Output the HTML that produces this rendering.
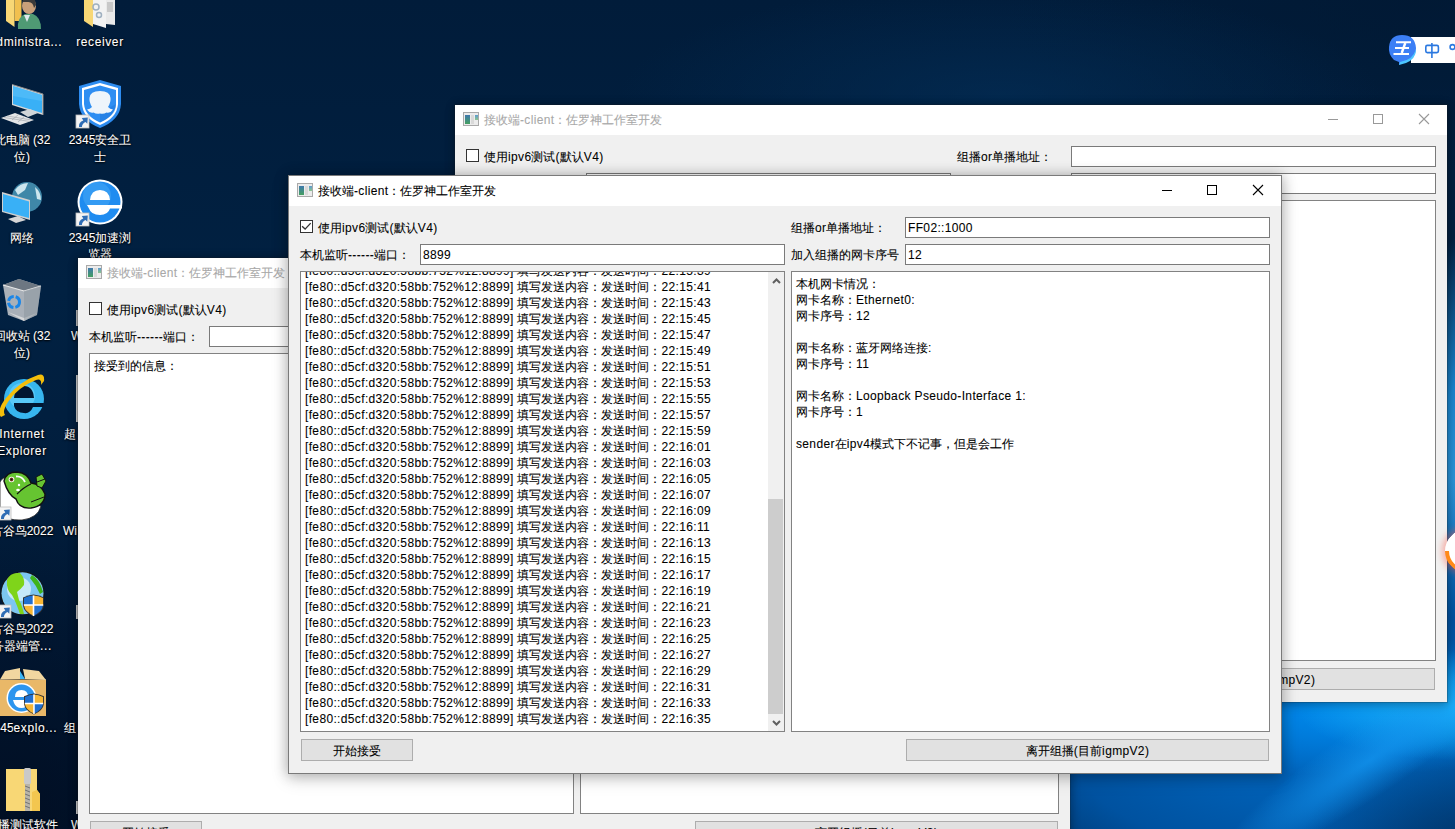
<!DOCTYPE html>
<html><head><meta charset="utf-8">
<style>
*{margin:0;padding:0;box-sizing:border-box}
html,body{width:1455px;height:829px;overflow:hidden}
body{position:relative;font-family:"Liberation Sans", sans-serif;font-size:12px;color:#000;-webkit-text-stroke:0.08px currentColor;
background:#03193a;}
#bg{position:absolute;left:0;top:0;width:1455px;height:829px;
background:
 radial-gradient(ellipse 160px 55px at 1455px 705px, rgba(30,185,255,0.95), rgba(30,185,255,0) 100%),
 radial-gradient(ellipse 300px 70px at 1340px 705px, rgba(0,140,240,0.95), rgba(0,140,240,0) 100%),
 radial-gradient(ellipse 170px 110px at 1470px 850px, rgba(1,50,100,0.95), rgba(1,50,100,0) 100%),
 radial-gradient(ellipse 520px 260px at 1320px 730px, #006cc8 0%, #0052a0 50%, rgba(0,60,130,0) 100%),
 radial-gradient(ellipse 110px 300px at 1490px 520px, #4ab0ec 0%, rgba(30,150,230,0.85) 55%, rgba(0,60,130,0) 100%),
 radial-gradient(ellipse 300px 350px at 0px 829px, rgba(1,10,28,0.6), rgba(1,10,28,0) 100%),
 radial-gradient(ellipse 380px 110px at 1000px 95px, rgba(3,44,84,0.75), rgba(3,44,84,0) 100%),
 radial-gradient(ellipse 420px 170px at 1420px 0px, rgba(1,24,50,0.7), rgba(1,24,50,0) 100%),
 linear-gradient(180deg, #011c3a 0%, #012142 35%, #011d3c 65%, #01152e 100%);
}
.win{position:absolute;width:994px;height:599px;border:1px solid #7b7b7b;background:#f0f0f0;background-clip:padding-box}
.title{position:absolute;left:0;top:0;width:992px;height:30px;background:#fff}
.ticon{position:absolute;left:8px;top:7px;width:16px;height:14px;border:1px solid #a9a9a9;background:#ececec}
.tig{position:absolute;left:1px;top:2px;width:5px;height:9px;background:linear-gradient(180deg,#3f78ad,#45a060)}
.tiw{position:absolute;left:7px;top:2px;width:3px;height:9px;background:#d9d9d9}
.tib{position:absolute;left:11px;top:2px;width:3px;height:5px;background:linear-gradient(180deg,#5d9ad0,#8cc68c)}
.ttext{position:absolute;left:29px;top:7px;line-height:16px;white-space:nowrap}
.tmin{position:absolute;left:873px;top:14px;width:10px;height:1px}
.tmax{position:absolute;left:918px;top:9px;width:10px;height:10px;border:1px solid #000}
.tclose{position:absolute;left:963px;top:8px}
.cb{position:absolute;width:13px;height:13px;border:1px solid #333;background:#fff}
.lbl{position:absolute;line-height:16px;white-space:nowrap}
.inp{position:absolute;width:365px;height:21px;border:1px solid #7a7a7a;background:#fff}
.inp span{position:absolute;left:2px;top:2px;line-height:16px}
.ta{position:absolute;height:461px;border:1px solid #828282;background:#fff;overflow:hidden}
.log{position:absolute;left:4px;white-space:nowrap}
.ln{height:16px;line-height:16px}
.sb{position:absolute;right:0;top:0;width:16px;height:459px;background:#f0f0f0}
.thumb{position:absolute;left:0;top:227px;width:15px;height:215px;background:#cdcdcd}
.arr{position:absolute;left:3.5px}
.btn{position:absolute;height:22px;border:1px solid #adadad;background:#e1e1e1;text-align:center}
.btn span{line-height:22.5px}
.icon{position:absolute}
.l{font-style:normal;letter-spacing:0.35px}
.c{display:inline-block;font-weight:normal;white-space:nowrap;vertical-align:top;text-align:justify;text-align-last:justify}
.ll{font-style:normal;letter-spacing:0.6px}
.il{position:absolute;color:#fff;text-align:center;line-height:16px;text-shadow:0 0 2px #000,0 1px 2px #000;white-space:nowrap}
</style></head><body>
<div id="bg"></div>
<div style="position:absolute;left:1190px;top:725px;width:360px;height:70px;border-radius:50%;background:radial-gradient(ellipse closest-side, rgba(20,150,240,0.75), rgba(20,150,240,0));transform:rotate(-34deg)"></div>
<svg style="position:absolute;left:0;top:0" width="1455" height="829"><path d="M6 0 L14.5 0 L14.5 27 L6 21 Z" fill="#f8d775"/><path d="M14.5 0 L21.5 0 L21.5 21 L14.5 21 Z" fill="#f1c04f"/><ellipse cx="29" cy="6" rx="7" ry="8" fill="#c9a07a"/><path d="M22 2 Q24 -3 30 -3 Q36 -2 36 5 L34 8 Q33 1 27 2 Z" fill="#3a3a3a"/><path d="M18 29 Q17 17 25 14 L33 14 Q41 17 41 29 Z" fill="#4f9a74"/><path d="M24 15 L27 22 L30 15 Z" fill="#dfe9ee"/><path d="M84 0 L93 0 L93 27 L84 21 Z" fill="#f8d775"/><path d="M93 0 L106 0 L106 28 L93 24 Z" fill="#f2f2f2"/><path d="M106 0 L115 0 L115 25 L106 24 Z" fill="#e9e9e9"/><circle cx="96" cy="7" r="3" fill="none" stroke="#9fb0c0" stroke-width="1.5"/><circle cx="99" cy="15" r="2.5" fill="none" stroke="#9fb0c0" stroke-width="1.5"/><rect x="107" y="2" width="6" height="10" fill="#c8c8c8"/><path d="M12 84.5 L43 94 L43 115 L12 105 Z" fill="#d8d8d8"/><path d="M13 86 L42 95 L42 113 L13 104 Z" fill="#39b0f6"/><path d="M13 86 L42 95 L42 101 L13 96 Z" fill="#5cc2fa" opacity="0.6"/><path d="M20 112 L30 109 L38 113 L28 117 Z" fill="#d0d5d8"/><path d="M1 118 L15 113 L34 120 L20 125 Z" fill="#e4e6e8"/><path d="M4 117.5 L30 121.5 M7 116 L32 120 M12 120 L19 114 M18 122 L25 116" stroke="#9aa0a6" stroke-width="0.6"/><path d="M12 84.5 L43 94 L43 115" fill="none" stroke="#8a8a8a" stroke-width="1"/><path d="M79 86 L100 80 L121 86 L121 104 Q120 120 100 128 Q80 120 79 104 Z" fill="#2d8cf0"/><path d="M82 88 L100 83 L118 88 L118 104 Q117 118 100 125 Q83 118 82 104 Z" fill="#fff"/><path d="M84 90 L100 85.5 L116 90 L116 104 Q115 116 100 122.5 Q85 116 84 104 Z" fill="#2e8ef2"/><path d="M100 113 L116 104 L116 106 Q115 116 100 122.5 Z" fill="#1d73d6" opacity="0.45"/><path d="M92 107 Q89 102 89.5 98 Q90 91 100 91 Q110 91 110.5 98 Q111 102 108 107 Q110 109 113 109.5 Q110.5 113.5 106.5 112.5 Q103.5 114.5 100 113.5 Q96.5 114.5 93.5 112.5 Q89.5 113.5 87 109.5 Q90 109 92 107 Z" fill="#eef5fb"/><g transform="translate(76,115)"><rect x="0" y="0" width="13" height="13" fill="#f4f4f4" stroke="#bdbdbd" stroke-width="0.8"/><path d="M3 12 Q2.5 7 7.3 5.4 L5.8 3 L11.8 2.6 L11.3 8.8 L9.6 6.9 Q6.2 8.2 5.9 12 Z" fill="#2f6db5"/></g><circle cx="27" cy="197" r="15" fill="#3f87a8"/><path d="M15 190 Q20 183 28 183 L25 190 L18 195 Z" fill="#cde6ee"/><path d="M35 187 Q41 192 41 200 L37 199 Z" fill="#cde6ee"/><path d="M2 192 L30 200 L30 220 L2 212 Z" fill="#cfcfcf"/><path d="M3 194 L29 201.5 L29 218 L3 211 Z" fill="#39b0f6"/><path d="M8 219 L18 216 L26 220 L16 223 Z" fill="#d6d6d6"/><circle cx="100" cy="202" r="22.5" fill="#fff"/><circle cx="100" cy="202" r="20.5" fill="#1f8cf0"/><circle cx="97" cy="196" r="14" fill="#4aaaf6" opacity="0.5"/><path d="M90 200 Q91 190 100 190 Q109 190 110 200 Z M87 205 L122 205 L122 208.5 L110 208.5 Q108 215 100 215 Q91 215 89 208.5 Z" fill="#fff"/><g transform="translate(76,213)"><rect x="0" y="0" width="13" height="13" fill="#f4f4f4" stroke="#bdbdbd" stroke-width="0.8"/><path d="M3 12 Q2.5 7 7.3 5.4 L5.8 3 L11.8 2.6 L11.3 8.8 L9.6 6.9 Q6.2 8.2 5.9 12 Z" fill="#2f6db5"/></g><path d="M3 285 L19 279 L41 286 L37 315 L24 321 L8 315 Z" fill="#a9b0b8"/><path d="M3 285 L19 279 L41 286 L24 291 Z" fill="#6d7782"/><path d="M3 285 L24 291 L41 286" fill="none" stroke="#e8e8e8" stroke-width="1.2"/><path d="M8 312 L24 318 L37 313 L24 321 Z" fill="#d4d6d8"/><path d="M24 291 L24 321 L37 315 L41 286 Z" fill="#8a939c" opacity="0.5"/><circle cx="14" cy="302" r="5.5" fill="none" stroke="#1a86e8" stroke-width="3" stroke-dasharray="7 2"/><circle cx="24" cy="399" r="20" fill="#37b6ef"/><circle cx="22" cy="396" r="13" fill="#6fd4fb" opacity="0.6"/><path d="M14 398 Q15 386 24 386 Q33 386 34 398 Z" fill="#021631"/><path d="M14 403 L44 403 L43 407 L33 407 Q30 414 24 413 Q16 413 14 406 Z" fill="#021631"/><path d="M1 417 Q-4 411 6 398 Q20 381 38 375 Q45 373 44 381 L41 385 Q42 378 36 380 Q18 387 8 402 Q2 411 5 415 Z" fill="#f4be0a"/><path d="M0 482 Q3 476 9 478 L20 492 Q30 503 41 506 Q38 518 22 520 Q6 521 0 512 Z" fill="#fff" stroke="#222" stroke-width="0.8"/><path d="M4 481 Q6 472 17 472 Q28 473 31 483 Q41 484 45 494 Q45 506 31 508 Q19 509 16 499 Q8 495 4 481 Z" fill="#66c431" stroke="#111" stroke-width="1.4"/><path d="M17 494 Q24 487 31 484" fill="none" stroke="#111" stroke-width="1.2"/><path d="M31 502 L44 497" stroke="#111" stroke-width="1"/><path d="M36 477 L42 474 L46 481 L42 488 L37 486 Z" fill="#66c431" stroke="#111" stroke-width="1"/><path d="M37 482 L45 479" stroke="#111" stroke-width="1"/><circle cx="11.5" cy="479.5" r="2.8" fill="#fff"/><circle cx="11.5" cy="479.5" r="1.9" fill="#8a4a2a"/><circle cx="11.5" cy="479.5" r="1.1" fill="#111"/><path d="M16 476.5 Q22 476 25 482" stroke="#fff" stroke-width="1.8" fill="none"/><circle cx="19" cy="485" r="1.2" fill="#fff"/><ellipse cx="18" cy="490" rx="1.8" ry="1.2" fill="#fff"/><g transform="translate(-2,507)"><rect x="0" y="0" width="13" height="13" fill="#f4f4f4" stroke="#bdbdbd" stroke-width="0.8"/><path d="M3 12 Q2.5 7 7.3 5.4 L5.8 3 L11.8 2.6 L11.3 8.8 L9.6 6.9 Q6.2 8.2 5.9 12 Z" fill="#2f6db5"/></g><circle cx="22.5" cy="593.3" r="22" fill="#151515"/><circle cx="22.5" cy="593.3" r="21" fill="#7cc6f0"/><circle cx="19" cy="589" r="12" fill="#d9f0fb" opacity="0.8"/><path d="M7 580 Q10 572 20 573 Q25 578 24 585 Q20 590 17 592 L19 600 Q22 605 24 614 L20 614 Q16 602 12 595 Q6 590 7 580 Z" fill="#7fd41a"/><path d="M32 575 Q40 580 43 592 L40 594 Q36 585 30 578 Z" fill="#3fb31a"/><g transform="translate(23,594.5) scale(1)"><path d="M0 3 Q5 0.5 10.5 0 Q16 0.5 21 3 L21 11 Q20 18 10.5 22 Q1 18 0 11 Z" fill="#333"/><path d="M1 3.6 Q5.5 1.4 10.5 1 L10.5 10.5 L1 10.5 Z" fill="#1f6fd0"/><path d="M10.5 1 Q15.5 1.4 20 3.6 L20 10.5 L10.5 10.5 Z" fill="#f7b635"/><path d="M1 10.5 L10.5 10.5 L10.5 21 Q2 17.5 1 11 Z" fill="#f7b635"/><path d="M10.5 10.5 L20 10.5 L20 11 Q19 17.5 10.5 21 Z" fill="#1f6fd0"/><path d="M10.5 1 L10.5 21.5 M0.8 10.5 L20.2 10.5" stroke="#fff" stroke-width="1.6"/></g><g transform="translate(-2,605)"><rect x="0" y="0" width="13" height="13" fill="#f4f4f4" stroke="#bdbdbd" stroke-width="0.8"/><path d="M3 12 Q2.5 7 7.3 5.4 L5.8 3 L11.8 2.6 L11.3 8.8 L9.6 6.9 Q6.2 8.2 5.9 12 Z" fill="#2f6db5"/></g><path d="M0 679.5 L46 679.5 L46 716 L0 716 Z" fill="#e9b868"/><path d="M0 679.5 L5 671 L20 668 L20 679 Z" fill="#f1d7a0"/><path d="M23 669 L39 671 L46 680 L25 679 Z" fill="#f1d7a0"/><path d="M20 671 L25 679 L20 679 Z" fill="#3cb5f5"/><circle cx="21.5" cy="698" r="15" fill="#fff"/><circle cx="21.5" cy="698" r="13.5" fill="#2c95ee"/><path d="M15 697 Q15 690 21.5 690 Q28 690 28 697 Z M13 700 L36 700 L36 703 L28 703 Q27 708 21.5 708 Q16 708 14 703 Z" fill="#fff"/><g transform="translate(24,693.5) scale(0.95)"><path d="M0 3 Q5 0.5 10.5 0 Q16 0.5 21 3 L21 11 Q20 18 10.5 22 Q1 18 0 11 Z" fill="#333"/><path d="M1 3.6 Q5.5 1.4 10.5 1 L10.5 10.5 L1 10.5 Z" fill="#1f6fd0"/><path d="M10.5 1 Q15.5 1.4 20 3.6 L20 10.5 L10.5 10.5 Z" fill="#f7b635"/><path d="M1 10.5 L10.5 10.5 L10.5 21 Q2 17.5 1 11 Z" fill="#f7b635"/><path d="M10.5 10.5 L20 10.5 L20 11 Q19 17.5 10.5 21 Z" fill="#1f6fd0"/><path d="M10.5 1 L10.5 21.5 M0.8 10.5 L20.2 10.5" stroke="#fff" stroke-width="1.6"/></g><path d="M6 769 L37 769 L37 790 L40 794 L40 811 L6 811 Z" fill="#f8d775"/><path d="M32 792 L37 790 L40 794 L40 811 L32 811 Z" fill="#f3c64f"/><rect x="24" y="768" width="7" height="16" rx="1.5" fill="#c9c9c9"/><rect x="25" y="784" width="5" height="27" fill="#b8b4a8"/><path d="M25 786 L30 788 M25 790 L30 792 M25 794 L30 796 M25 798 L30 800 M25 802 L30 804 M25 806 L30 808" stroke="#6b6b6b" stroke-width="0.9"/><rect x="76" y="310" width="2" height="16" fill="#bfbfbf"/><rect x="76" y="375" width="2" height="47" fill="#cfcfcf"/><rect x="76" y="801" width="2" height="13" fill="#cfcfcf"/><rect x="76" y="605" width="2" height="14" fill="#c8c8c8"/></svg>
<div class="il" style="left:-25.0px;top:34px;width:100px"><i class="ll">Administra...</i></div><div class="il" style="left:62.0px;top:34px;width:76px"><i class="ll">receiver</i></div><div class="il" style="left:-23.0px;top:132px;width:90px"><b class="c" style="width:36px">此电脑</b> (32</div><div class="il" style="left:-23.0px;top:148.5px;width:90px"><b class="c" style="width:12px">位</b>)</div><div class="il" style="left:62.0px;top:132px;width:76px">2345<b class="c" style="width:36px">安全卫</b></div><div class="il" style="left:62.0px;top:148.5px;width:76px"><b class="c" style="width:12px">士</b></div><div class="il" style="left:-23.0px;top:229.5px;width:90px"><b class="c" style="width:24px">网络</b></div><div class="il" style="left:62.0px;top:229.5px;width:76px">2345<b class="c" style="width:36px">加速浏</b></div><div class="il" style="left:62.0px;top:245.6px;width:76px"><b class="c" style="width:24px">览器</b></div><div class="il" style="left:-23.0px;top:328px;width:90px"><b class="c" style="width:36px">回收站</b> (32</div><div class="il" style="left:-23.0px;top:345px;width:90px"><b class="c" style="width:12px">位</b>)</div><div class="il" style="left:-23.0px;top:426px;width:90px"><i class="ll">Internet</i></div><div class="il" style="left:-23.0px;top:442.6px;width:90px"><i class="ll">Explorer</i></div><div class="il" style="left:-23.0px;top:523px;width:90px"><b class="c" style="width:36px">古谷鸟</b>2022</div><div class="il" style="left:-23.0px;top:621px;width:90px"><b class="c" style="width:36px">古谷鸟</b>2022</div><div class="il" style="left:-23.0px;top:638px;width:90px"><b class="c" style="width:48px">务器端管</b><i class="ll">...</i></div><div class="il" style="left:-28.0px;top:720px;width:100px">2345<i class="ll">explo...</i></div><div class="il" style="left:-28.0px;top:817px;width:100px"><b class="c" style="width:72px">组播测试软件</b></div><div class="il" style="left:71px;top:328px;text-align:left">W</div><div class="il" style="left:64px;top:426px;text-align:left"><b class="c" style="width:12px">超</b></div><div class="il" style="left:63px;top:523px;text-align:left">Wi</div><div class="il" style="left:64px;top:720px;text-align:left"><b class="c" style="width:12px">组</b></div><div class="il" style="left:71px;top:817px;text-align:left">W</div>
<div style="position:absolute;left:1411px;top:37px;width:44px;height:26px;background:#fff"></div>
<svg style="position:absolute;left:1386px;top:33px" width="69" height="34"><path d="M8 27 Q2 21 3 14 Q4 2 16 2 Q29 2 30 15 Q30 26 18 29 L13 32 L13 29 Z" fill="#3c7ff5"/><path d="M14 29 Q27 27 30 16 Q30 26 20 30 L13 32 Z" fill="#4cc6ff"/>
<path d="M10 9.2 L25 9.2 M9 14.9 L23 14.9 M7.5 20.9 L23 20.9" stroke="#fff" stroke-width="2"/><path d="M19.3 10 L15.7 20" stroke="#fff" stroke-width="2.4"/>
<rect x="39.8" y="12.4" width="12.6" height="7.2" rx="1.5" fill="none" stroke="#2a78e0" stroke-width="1.6"/><path d="M45.9 10 L45.9 25" stroke="#2a78e0" stroke-width="1.6"/>
<circle cx="66.5" cy="14" r="2.4" fill="none" stroke="#2a78e0" stroke-width="1.6"/></svg>
<div style="position:absolute;left:1445px;top:529px;width:44px;height:44px;border-radius:50%;background:#fff;border:4px solid #ff8a1a;border-top-color:#fff;border-right-color:#fff;transform:rotate(-45deg);box-shadow:0 0 6px 3px rgba(255,80,60,0.4);z-index:10"></div>

<div class="win" style="left:77px;top:257px;border-color:rgba(30,30,30,0.2);box-shadow:0 0 8px rgba(0,0,0,0.22), 0 4px 10px rgba(0,0,0,0.15);z-index:1">
  <div class="title">
    <div class="ticon"><div class="tig"></div><div class="tiw"></div><div class="tib"></div></div>
    <div class="ttext" style="color:#a8a8a8"><b class="c" style="width:36px">接收端</b><i class="l">-client</i><b class="c" style="width:108px">：佐罗神工作室开发</b></div>
    <div class="tmin" style="background:#999"></div>
    <div class="tmax" style="border-color:#999"></div>
    <svg class="tclose" width="12" height="12" viewBox="0 0 12 12"><path d="M1 1 L11 11 M11 1 L1 11" stroke="#999" stroke-width="1.1"/></svg>
  </div>
  <div class="cb" style="left:11px;top:44px"></div>
  <div class="lbl" style="left:29px;top:44px"><b class="c" style="width:24px">使用</b><i class="l">ipv6</i><b class="c" style="width:24px">测试</b><i class="l">(</i><b class="c" style="width:24px">默认</b><i class="l">V4)</i></div>
  <div class="lbl" style="left:502px;top:44px"><b class="c" style="width:24px">组播</b><i class="l">or</i><b class="c" style="width:60px">单播地址：</b></div>
  <div class="inp" style="left:616px;top:41px"><span></span></div>
  <div class="lbl" style="left:11px;top:71px"><b class="c" style="width:48px">本机监听</b><i class="l">------</i><b class="c" style="width:36px">端口：</b></div>
  <div class="inp" style="left:131px;top:68px"><span></span></div>
  <div class="lbl" style="left:502px;top:71px"><b class="c" style="width:108px">加入组播的网卡序号</b></div>
  <div class="inp" style="left:616px;top:68px"><span></span></div>
  <div class="ta" style="left:11px;top:95px;width:485px"><div class="log" style="top:4px"><div class="ln"><b class="c" style="width:84px">接受到的信息：</b></div></div></div>
  <div class="ta" style="left:502px;top:95px;width:479px"></div>
  <div class="btn" style="left:12px;top:563px;width:112px"><span><b class="c" style="width:48px">开始接受</b></span></div>
  <div class="btn" style="left:617px;top:563px;width:363px"><span><b class="c" style="width:48px">离开组播</b><i class="l">(</i><b class="c" style="width:24px">目前</b><i class="l">igmpV2)</i></span></div>
</div>

<div class="win" style="left:454px;top:104px;border-color:rgba(30,30,30,0.2);box-shadow:0 0 8px rgba(0,0,0,0.22), 0 4px 10px rgba(0,0,0,0.15);z-index:2">
  <div class="title">
    <div class="ticon"><div class="tig"></div><div class="tiw"></div><div class="tib"></div></div>
    <div class="ttext" style="color:#a8a8a8"><b class="c" style="width:36px">接收端</b><i class="l">-client</i><b class="c" style="width:108px">：佐罗神工作室开发</b></div>
    <div class="tmin" style="background:#999"></div>
    <div class="tmax" style="border-color:#999"></div>
    <svg class="tclose" width="12" height="12" viewBox="0 0 12 12"><path d="M1 1 L11 11 M11 1 L1 11" stroke="#999" stroke-width="1.1"/></svg>
  </div>
  <div class="cb" style="left:11px;top:44px"></div>
  <div class="lbl" style="left:29px;top:44px"><b class="c" style="width:24px">使用</b><i class="l">ipv6</i><b class="c" style="width:24px">测试</b><i class="l">(</i><b class="c" style="width:24px">默认</b><i class="l">V4)</i></div>
  <div class="lbl" style="left:502px;top:44px"><b class="c" style="width:24px">组播</b><i class="l">or</i><b class="c" style="width:60px">单播地址：</b></div>
  <div class="inp" style="left:616px;top:41px"><span></span></div>
  <div class="lbl" style="left:11px;top:71px"><b class="c" style="width:48px">本机监听</b><i class="l">------</i><b class="c" style="width:36px">端口：</b></div>
  <div class="inp" style="left:131px;top:68px"><span></span></div>
  <div class="lbl" style="left:502px;top:71px"><b class="c" style="width:108px">加入组播的网卡序号</b></div>
  <div class="inp" style="left:616px;top:68px"><span></span></div>
  <div class="ta" style="left:11px;top:95px;width:485px"></div>
  <div class="ta" style="left:502px;top:95px;width:479px"></div>
  <div class="btn" style="left:12px;top:563px;width:112px"><span><b class="c" style="width:48px">开始接受</b></span></div>
  <div class="btn" style="left:617px;top:563px;width:363px"><span><b class="c" style="width:48px">离开组播</b><i class="l">(</i><b class="c" style="width:24px">目前</b><i class="l">igmpV2)</i></span></div>
</div>

<div class="win" style="left:288px;top:175px;border-color:#7a7a7a;box-shadow:0 0 12px 1px rgba(0,0,0,0.21), 0 5px 16px rgba(0,0,0,0.17);z-index:3">
  <div class="title">
    <div class="ticon"><div class="tig"></div><div class="tiw"></div><div class="tib"></div></div>
    <div class="ttext" style="color:#000"><b class="c" style="width:36px">接收端</b><i class="l">-client</i><b class="c" style="width:108px">：佐罗神工作室开发</b></div>
    <div class="tmin" style="background:#000"></div>
    <div class="tmax" style="border-color:#000"></div>
    <svg class="tclose" width="12" height="12" viewBox="0 0 12 12"><path d="M1 1 L11 11 M11 1 L1 11" stroke="#000" stroke-width="1.1"/></svg>
  </div>
  <div class="cb" style="left:11px;top:44px"><svg width="13" height="13" style="position:absolute;left:0;top:0"><path d="M1.1 5.3 L4.1 8.1 L9.7 2.1" fill="none" stroke="#333" stroke-width="1.35"/></svg></div>
  <div class="lbl" style="left:29px;top:44px"><b class="c" style="width:24px">使用</b><i class="l">ipv6</i><b class="c" style="width:24px">测试</b><i class="l">(</i><b class="c" style="width:24px">默认</b><i class="l">V4)</i></div>
  <div class="lbl" style="left:502px;top:44px"><b class="c" style="width:24px">组播</b><i class="l">or</i><b class="c" style="width:60px">单播地址：</b></div>
  <div class="inp" style="left:616px;top:41px"><span><i class="l">FF02::1000</i></span></div>
  <div class="lbl" style="left:11px;top:71px"><b class="c" style="width:48px">本机监听</b><i class="l">------</i><b class="c" style="width:36px">端口：</b></div>
  <div class="inp" style="left:131px;top:68px"><span><i class="l">8899</i></span></div>
  <div class="lbl" style="left:502px;top:71px"><b class="c" style="width:108px">加入组播的网卡序号</b></div>
  <div class="inp" style="left:616px;top:68px"><span><i class="l">12</i></span></div>
  <div class="ta" style="left:11px;top:95px;width:485px"><div class="log" style="top:-9px"><div class="ln"><i class="l">[fe80::d5cf:d320:58bb:752%12:8899] </i><b class="c" style="width:144px">填写发送内容：发送时间：</b><i class="l">22:15:39</i></div><div class="ln"><i class="l">[fe80::d5cf:d320:58bb:752%12:8899] </i><b class="c" style="width:144px">填写发送内容：发送时间：</b><i class="l">22:15:41</i></div><div class="ln"><i class="l">[fe80::d5cf:d320:58bb:752%12:8899] </i><b class="c" style="width:144px">填写发送内容：发送时间：</b><i class="l">22:15:43</i></div><div class="ln"><i class="l">[fe80::d5cf:d320:58bb:752%12:8899] </i><b class="c" style="width:144px">填写发送内容：发送时间：</b><i class="l">22:15:45</i></div><div class="ln"><i class="l">[fe80::d5cf:d320:58bb:752%12:8899] </i><b class="c" style="width:144px">填写发送内容：发送时间：</b><i class="l">22:15:47</i></div><div class="ln"><i class="l">[fe80::d5cf:d320:58bb:752%12:8899] </i><b class="c" style="width:144px">填写发送内容：发送时间：</b><i class="l">22:15:49</i></div><div class="ln"><i class="l">[fe80::d5cf:d320:58bb:752%12:8899] </i><b class="c" style="width:144px">填写发送内容：发送时间：</b><i class="l">22:15:51</i></div><div class="ln"><i class="l">[fe80::d5cf:d320:58bb:752%12:8899] </i><b class="c" style="width:144px">填写发送内容：发送时间：</b><i class="l">22:15:53</i></div><div class="ln"><i class="l">[fe80::d5cf:d320:58bb:752%12:8899] </i><b class="c" style="width:144px">填写发送内容：发送时间：</b><i class="l">22:15:55</i></div><div class="ln"><i class="l">[fe80::d5cf:d320:58bb:752%12:8899] </i><b class="c" style="width:144px">填写发送内容：发送时间：</b><i class="l">22:15:57</i></div><div class="ln"><i class="l">[fe80::d5cf:d320:58bb:752%12:8899] </i><b class="c" style="width:144px">填写发送内容：发送时间：</b><i class="l">22:15:59</i></div><div class="ln"><i class="l">[fe80::d5cf:d320:58bb:752%12:8899] </i><b class="c" style="width:144px">填写发送内容：发送时间：</b><i class="l">22:16:01</i></div><div class="ln"><i class="l">[fe80::d5cf:d320:58bb:752%12:8899] </i><b class="c" style="width:144px">填写发送内容：发送时间：</b><i class="l">22:16:03</i></div><div class="ln"><i class="l">[fe80::d5cf:d320:58bb:752%12:8899] </i><b class="c" style="width:144px">填写发送内容：发送时间：</b><i class="l">22:16:05</i></div><div class="ln"><i class="l">[fe80::d5cf:d320:58bb:752%12:8899] </i><b class="c" style="width:144px">填写发送内容：发送时间：</b><i class="l">22:16:07</i></div><div class="ln"><i class="l">[fe80::d5cf:d320:58bb:752%12:8899] </i><b class="c" style="width:144px">填写发送内容：发送时间：</b><i class="l">22:16:09</i></div><div class="ln"><i class="l">[fe80::d5cf:d320:58bb:752%12:8899] </i><b class="c" style="width:144px">填写发送内容：发送时间：</b><i class="l">22:16:11</i></div><div class="ln"><i class="l">[fe80::d5cf:d320:58bb:752%12:8899] </i><b class="c" style="width:144px">填写发送内容：发送时间：</b><i class="l">22:16:13</i></div><div class="ln"><i class="l">[fe80::d5cf:d320:58bb:752%12:8899] </i><b class="c" style="width:144px">填写发送内容：发送时间：</b><i class="l">22:16:15</i></div><div class="ln"><i class="l">[fe80::d5cf:d320:58bb:752%12:8899] </i><b class="c" style="width:144px">填写发送内容：发送时间：</b><i class="l">22:16:17</i></div><div class="ln"><i class="l">[fe80::d5cf:d320:58bb:752%12:8899] </i><b class="c" style="width:144px">填写发送内容：发送时间：</b><i class="l">22:16:19</i></div><div class="ln"><i class="l">[fe80::d5cf:d320:58bb:752%12:8899] </i><b class="c" style="width:144px">填写发送内容：发送时间：</b><i class="l">22:16:21</i></div><div class="ln"><i class="l">[fe80::d5cf:d320:58bb:752%12:8899] </i><b class="c" style="width:144px">填写发送内容：发送时间：</b><i class="l">22:16:23</i></div><div class="ln"><i class="l">[fe80::d5cf:d320:58bb:752%12:8899] </i><b class="c" style="width:144px">填写发送内容：发送时间：</b><i class="l">22:16:25</i></div><div class="ln"><i class="l">[fe80::d5cf:d320:58bb:752%12:8899] </i><b class="c" style="width:144px">填写发送内容：发送时间：</b><i class="l">22:16:27</i></div><div class="ln"><i class="l">[fe80::d5cf:d320:58bb:752%12:8899] </i><b class="c" style="width:144px">填写发送内容：发送时间：</b><i class="l">22:16:29</i></div><div class="ln"><i class="l">[fe80::d5cf:d320:58bb:752%12:8899] </i><b class="c" style="width:144px">填写发送内容：发送时间：</b><i class="l">22:16:31</i></div><div class="ln"><i class="l">[fe80::d5cf:d320:58bb:752%12:8899] </i><b class="c" style="width:144px">填写发送内容：发送时间：</b><i class="l">22:16:33</i></div><div class="ln"><i class="l">[fe80::d5cf:d320:58bb:752%12:8899] </i><b class="c" style="width:144px">填写发送内容：发送时间：</b><i class="l">22:16:35</i></div></div>
<div class="sb"><div class="sbup"></div><div class="thumb"></div><div class="sbdn"></div>
<svg class="arr" style="top:6px" width="9" height="6" viewBox="0 0 9 6"><path d="M1 5 L4.5 1.5 L8 5" fill="none" stroke="#606060" stroke-width="2"/></svg>
<svg class="arr" style="top:448px" width="9" height="6" viewBox="0 0 9 6"><path d="M1 1 L4.5 4.5 L8 1" fill="none" stroke="#606060" stroke-width="2"/></svg>
</div></div>
  <div class="ta" style="left:502px;top:95px;width:479px"><div class="log" style="top:4px"><div class="ln"><b class="c" style="width:84px">本机网卡情况：</b></div><div class="ln"><b class="c" style="width:60px">网卡名称：</b><i class="l">Ethernet0:</i></div><div class="ln"><b class="c" style="width:60px">网卡序号：</b><i class="l">12</i></div><div class="ln">&nbsp;</div><div class="ln"><b class="c" style="width:132px">网卡名称：蓝牙网络连接</b><i class="l">:</i></div><div class="ln"><b class="c" style="width:60px">网卡序号：</b><i class="l">11</i></div><div class="ln">&nbsp;</div><div class="ln"><b class="c" style="width:60px">网卡名称：</b><i class="l">Loopback Pseudo-Interface 1:</i></div><div class="ln"><b class="c" style="width:60px">网卡序号：</b><i class="l">1</i></div><div class="ln">&nbsp;</div><div class="ln"><i class="l">sender</i><b class="c" style="width:12px">在</b><i class="l">ipv4</i><b class="c" style="width:144px">模式下不记事，但是会工作</b></div></div></div>
  <div class="btn" style="left:12px;top:563px;width:112px"><span><b class="c" style="width:48px">开始接受</b></span></div>
  <div class="btn" style="left:617px;top:563px;width:363px"><span><b class="c" style="width:48px">离开组播</b><i class="l">(</i><b class="c" style="width:24px">目前</b><i class="l">igmpV2)</i></span></div>
</div>
</body></html>
